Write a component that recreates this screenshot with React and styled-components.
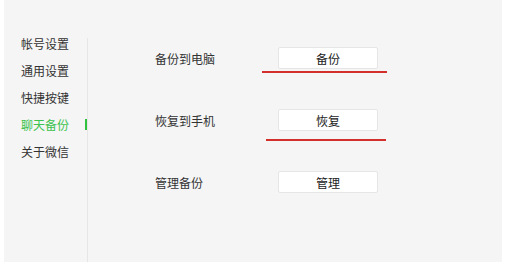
import React from 'react';
import styled, { createGlobalStyle } from 'styled-components';

const GlobalStyle = createGlobalStyle`
  html, body {
    margin: 0;
    padding: 0;
    background: #ffffff;
  }
  body {
    font-family: "Noto Sans CJK SC", "Liberation Sans", sans-serif;
    -webkit-font-smoothing: antialiased;
  }
`;

const Window = styled.div`
  width: 528px;
  height: 262px;
  display: flex;
  padding-left: 4px;
  box-sizing: border-box;
`;

const Panel = styled.div`
  width: 498px;
  height: 262px;
  background: #f5f5f5;
  display: flex;
`;

const Sidebar = styled.nav`
  width: 83px;
  padding-top: 30px;
  display: flex;
  flex-direction: column;
`;

const NavItem = styled.div`
  position: relative;
  height: 27px;
  line-height: 27px;
  padding-left: 17px;
  font-size: 12px;
  color: ${(p) => (p.$active ? '#3cc24e' : '#333333')};

  ${(p) =>
    p.$active &&
    `
    &::after {
      content: '';
      position: absolute;
      right: 0;
      top: 8px;
      width: 2px;
      height: 11px;
      background: #2fc23f;
    }
  `}
`;

const Divider = styled.div`
  width: 1px;
  margin-top: 38px;
  background: #e6e6e6;
`;

const Content = styled.main`
  flex: 1;
  padding: 47px 0 0 67px;
  display: flex;
  flex-direction: column;
  gap: 40px;
`;

const Row = styled.div`
  position: relative;
  display: flex;
  align-items: center;
  height: 22px;
`;

const Label = styled.div`
  width: 123px;
  font-size: 12px;
  color: #333333;
`;

const Button = styled.button`
  width: 100px;
  height: 22px;
  padding: 0;
  background: #ffffff;
  border: 1px solid #e6e6e6;
  border-radius: 2px;
  font-family: inherit;
  font-size: 12px;
  color: #222222;
  cursor: pointer;
`;

const Underline = styled.div`
  position: absolute;
  left: ${(p) => p.$left}px;
  top: ${(p) => p.$top}px;
  width: ${(p) => p.$width}px;
  height: 2px;
  background: #d3302c;
`;

const navItems = ['帐号设置', '通用设置', '快捷按键', '聊天备份', '关于微信'];

const rows = [
  { label: '备份到电脑', action: '备份', mark: { left: 107, top: 24, width: 125 } },
  { label: '恢复到手机', action: '恢复', mark: { left: 111, top: 30, width: 120 } },
  { label: '管理备份', action: '管理' },
];

export default function App() {
  return (
    <>
      <GlobalStyle />
      <Window>
        <Panel>
          <Sidebar>
            {navItems.map((item) => (
              <NavItem key={item} $active={item === '聊天备份'}>
                {item}
              </NavItem>
            ))}
          </Sidebar>
          <Divider />
          <Content>
            {rows.map((row) => (
              <Row key={row.label}>
                <Label>{row.label}</Label>
                <Button>{row.action}</Button>
                {row.mark && (
                  <Underline $left={row.mark.left} $top={row.mark.top} $width={row.mark.width} />
                )}
              </Row>
            ))}
          </Content>
        </Panel>
      </Window>
    </>
  );
}
